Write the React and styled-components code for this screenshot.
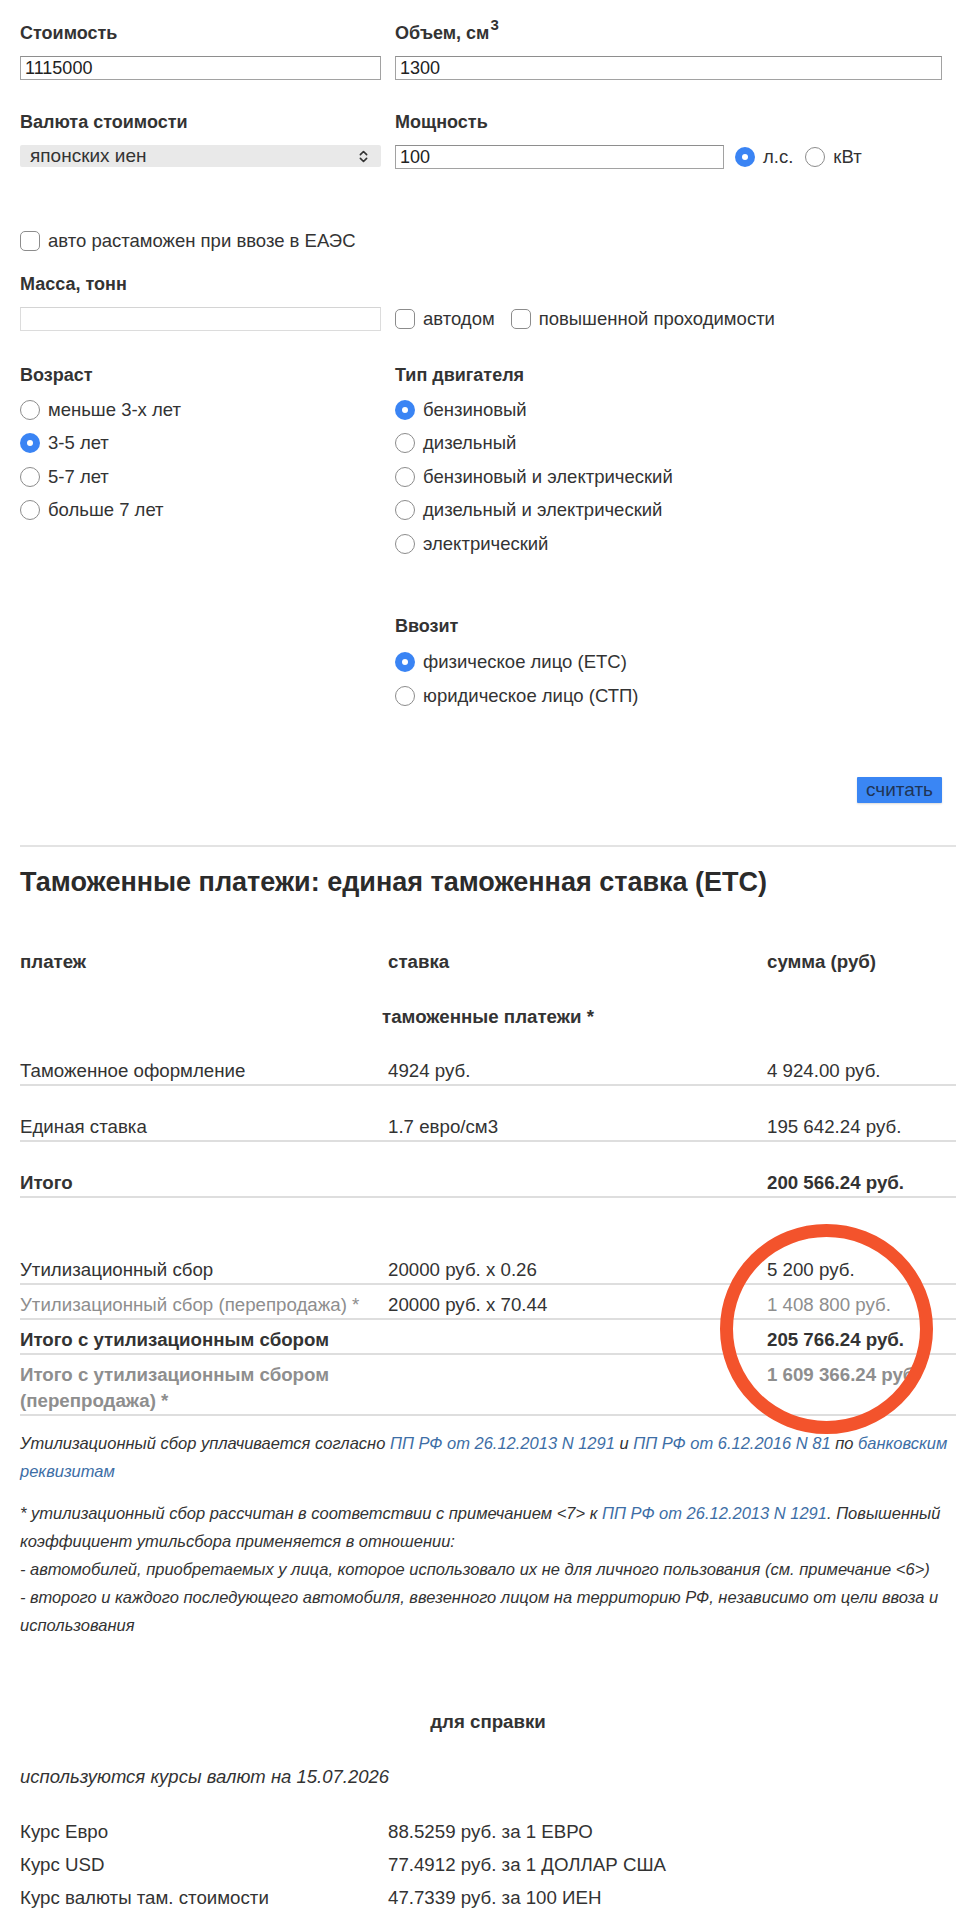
import React from 'react';
import styled, { createGlobalStyle, css } from 'styled-components';
import { ChevronsUpDown } from 'lucide-react';

const GlobalStyle = createGlobalStyle`
  html, body { margin: 0; padding: 0; background: #fff; }
  body {
    font-family: "Liberation Sans", Arial, Helvetica, sans-serif;
    color: #333;
    -webkit-font-smoothing: antialiased;
  }
  * { box-sizing: border-box; }
`;

const Page = styled.div`
  width: 960px;
  padding: 22px 4px 40px 20px;
`;

const FormRow = styled.div`
  display: grid;
  grid-template-columns: 375px 1fr;
  margin-top: ${(p) => p.$mt || 0}px;
`;

const Col = styled.div`
  padding-right: 14px;
  display: flex;
  flex-direction: column;
  justify-content: ${(p) => (p.$end ? 'flex-end' : 'flex-start')};
`;

const Label = styled.div`
  font-size: 18px;
  line-height: 22px;
  font-weight: bold;
  color: #333;
  margin-bottom: ${(p) => (p.$mb != null ? p.$mb : 12)}px;
  margin-top: ${(p) => p.$mt || 0}px;
  sup {
    font-size: 15px;
    line-height: 0;
    vertical-align: 9px;
    margin-left: 1px;
  }
`;

const TextInput = styled.input`
  display: block;
  width: ${(p) => (p.$w ? `${p.$w}px` : '100%')};
  height: 24px;
  margin: 0;
  padding: 0 4px;
  font-family: "Liberation Sans", Arial, sans-serif;
  font-size: 18px;
  color: #222;
  background: #fff;
  border: 1px solid ${(p) => (p.$light ? '#dcdcdc' : '#a2a2a2')};
  border-top-color: ${(p) => (p.$light ? '#d4d4d4' : '#8e8e8e')};
  outline: none;
`;

const SelectBox = styled.div`
  height: 22px;
  background: #e9e9e9;
  display: flex;
  align-items: center;
  justify-content: space-between;
  padding: 0 10px;
  font-size: 19px;
  color: #333;
  border-radius: 2px;
`;

const PowerRow = styled.div`
  display: flex;
  align-items: center;
`;

const Choice = styled.label`
  display: flex;
  align-items: center;
  gap: 8px;
  font-size: 18.5px;
  color: #333;
  height: ${(p) => (p.$h ? `${p.$h}px` : 'auto')};
  margin-left: ${(p) => p.$ml || 0}px;
  white-space: nowrap;
`;

const RadioDot = styled.span`
  flex: none;
  width: 20px;
  height: 20px;
  border-radius: 50%;
  position: relative;
  ${(p) =>
    p.$on
      ? css`
          background: #3a84f4;
          &::after {
            content: '';
            position: absolute;
            left: 7px;
            top: 7px;
            width: 6px;
            height: 6px;
            border-radius: 50%;
            background: #fff;
          }
        `
      : css`
          border: 1.5px solid #8c8c8c;
          background: #fff;
        `}
`;

const CheckBox = styled.span`
  flex: none;
  width: 20px;
  height: 20px;
  border: 1.5px solid #8c8c8c;
  border-radius: 5px;
  background: #fff;
`;

const CheckRow = styled.div`
  display: flex;
  align-items: center;
  height: 24px;
  gap: 16px;
`;

const OptionList = styled.div`
  display: flex;
  flex-direction: column;
`;

const ButtonRow = styled.div`
  display: flex;
  justify-content: flex-end;
  padding-right: 14px;
  margin-top: 64px;
`;

const CalcButton = styled.button`
  width: 85px;
  height: 26px;
  background: #3a86f4;
  color: #1f3556;
  border: none;
  border-radius: 1px;
  font-family: "Liberation Sans", Arial, sans-serif;
  font-size: 19px;
  line-height: 26px;
  padding: 0;
  box-shadow: 0 1px 2px rgba(0, 0, 0, 0.15);
`;

const Rule = styled.hr`
  margin: 42px 0 0;
  border: none;
  height: 2px;
  background: #e3e3e3;
`;

const Heading = styled.h2`
  margin: 20px 0 0;
  font-size: 27px;
  line-height: 30px;
  font-weight: bold;
  color: #2b2b2b;
`;

const TRow = styled.div`
  display: grid;
  grid-template-columns: 368px 379px 1fr;
  font-size: 18.7px;
  line-height: 26px;
  padding-top: ${(p) => p.$pt || 0}px;
  margin-top: ${(p) => p.$mt || 0}px;
  font-weight: ${(p) => (p.$bold ? 'bold' : 'normal')};
  color: ${(p) => (p.$muted ? '#8e8e8e' : '#333')};
  border-bottom: ${(p) => (p.$line ? '2px solid #dedede' : 'none')};
`;

const Cell = styled.div`
  color: ${(p) => (p.$dark ? '#333' : 'inherit')};
`;

const CenterRow = styled.div`
  text-align: center;
  font-size: 18.7px;
  line-height: 26px;
  font-weight: bold;
  color: #333;
  padding-top: ${(p) => p.$pt || 0}px;
  margin-top: ${(p) => p.$mt || 0}px;
`;

const RingBlock = styled.div`
  position: relative;
  margin-top: 52px;
`;

const Ring = styled.svg`
  position: absolute;
  left: 700px;
  top: -26px;
  width: 213px;
  height: 210px;
  pointer-events: none;
`;

const Note = styled.p`
  margin: ${(p) => p.$mt || 0}px 0 0;
  font-size: 16.5px;
  line-height: 28px;
  font-style: italic;
  color: #333;
`;

const Link = styled.a`
  color: #3d6ea6;
  text-decoration: none;
`;

const DateLine = styled.div`
  margin-top: 29px;
  font-size: 18.5px;
  line-height: 26px;
  font-style: italic;
  color: #333;
`;

const RatesTable = styled.div`
  margin-top: 22px;
`;

const RateRow = styled.div`
  display: grid;
  grid-template-columns: 368px 1fr;
  font-size: 18.7px;
  line-height: 26px;
  padding-top: 7px;
  color: #333;
`;

function Radio({ on, children, h, ml }) {
  return (
    <Choice $h={h} $ml={ml}>
      <RadioDot $on={on} />
      {children}
    </Choice>
  );
}

function Check({ children, h }) {
  return (
    <Choice $h={h}>
      <CheckBox />
      {children}
    </Choice>
  );
}

const ages = ['меньше 3-х лет', '3-5 лет', '5-7 лет', 'больше 7 лет'];
const engines = [
  'бензиновый',
  'дизельный',
  'бензиновый и электрический',
  'дизельный и электрический',
  'электрический',
];
const importers = ['физическое лицо (ЕТС)', 'юридическое лицо (СТП)'];

export default function App() {
  return (
    <>
      <GlobalStyle />
      <Page>
        <FormRow>
          <Col>
            <Label>Стоимость</Label>
            <TextInput defaultValue="1115000" />
          </Col>
          <Col>
            <Label>
              Объем, см<sup>3</sup>
            </Label>
            <TextInput defaultValue="1300" />
          </Col>
        </FormRow>

        <FormRow $mt={31}>
          <Col>
            <Label>Валюта стоимости</Label>
            <SelectBox>
              <span>японских иен</span>
              <ChevronsUpDown size={15} strokeWidth={2.6} color="#333" />
            </SelectBox>
          </Col>
          <Col>
            <Label>Мощность</Label>
            <PowerRow>
              <TextInput $w={329} defaultValue="100" />
              <Radio on ml={11}>л.с.</Radio>
              <Radio ml={12}>кВт</Radio>
            </PowerRow>
          </Col>
        </FormRow>

        <FormRow $mt={60}>
          <Col>
            <Check h={24}>авто растаможен при ввозе в ЕАЭС</Check>
          </Col>
        </FormRow>

        <FormRow $mt={20}>
          <Col>
            <Label>Масса, тонн</Label>
            <TextInput $light />
          </Col>
          <Col $end>
            <CheckRow>
              <Check>автодом</Check>
              <Check>повышенной проходимости</Check>
            </CheckRow>
          </Col>
        </FormRow>

        <FormRow $mt={33}>
          <Col>
            <Label $mb={7}>Возраст</Label>
            <OptionList>
              {ages.map((a, i) => (
                <Radio key={a} on={i === 1} h={33.5}>
                  {a}
                </Radio>
              ))}
            </OptionList>
          </Col>
          <Col>
            <Label $mb={7}>Тип двигателя</Label>
            <OptionList>
              {engines.map((e, i) => (
                <Radio key={e} on={i === 0} h={33.5}>
                  {e}
                </Radio>
              ))}
            </OptionList>
            <Label $mt={54.5} $mb={8.5}>
              Ввозит
            </Label>
            <OptionList>
              {importers.map((e, i) => (
                <Radio key={e} on={i === 0} h={33.5}>
                  {e}
                </Radio>
              ))}
            </OptionList>
          </Col>
        </FormRow>

        <ButtonRow>
          <CalcButton type="button">считать</CalcButton>
        </ButtonRow>

        <Rule />

        <Heading>Таможенные платежи: единая таможенная ставка (ЕТС)</Heading>

        <TRow $mt={52} $bold>
          <Cell>платеж</Cell>
          <Cell>ставка</Cell>
          <Cell>сумма (руб)</Cell>
        </TRow>
        <CenterRow $pt={29}>таможенные платежи *</CenterRow>

        <TRow $pt={28} $line>
          <Cell>Таможенное оформление</Cell>
          <Cell>4924 руб.</Cell>
          <Cell>4 924.00 руб.</Cell>
        </TRow>
        <TRow $pt={28} $line>
          <Cell>Единая ставка</Cell>
          <Cell>1.7 евро/см3</Cell>
          <Cell>195 642.24 руб.</Cell>
        </TRow>
        <TRow $pt={28} $line $bold>
          <Cell>Итого</Cell>
          <Cell />
          <Cell>200 566.24 руб.</Cell>
        </TRow>

        <RingBlock>
          <TRow $pt={7} $line>
            <Cell>Утилизационный сбор</Cell>
            <Cell>20000 руб. x 0.26</Cell>
            <Cell>5 200 руб.</Cell>
          </TRow>
          <TRow $pt={7} $line $muted>
            <Cell>Утилизационный сбор (перепродажа) *</Cell>
            <Cell $dark>20000 руб. x 70.44</Cell>
            <Cell>1 408 800 руб.</Cell>
          </TRow>
          <TRow $pt={7} $line $bold>
            <Cell>Итого с утилизационным сбором</Cell>
            <Cell />
            <Cell>205 766.24 руб.</Cell>
          </TRow>
          <TRow $pt={7} $line $bold $muted>
            <Cell>Итого с утилизационным сбором (перепродажа) *</Cell>
            <Cell />
            <Cell>1 609 366.24 руб.</Cell>
          </TRow>
          <Ring viewBox="0 0 213 210">
            <ellipse
              cx="106.5"
              cy="105"
              rx="100"
              ry="98.5"
              fill="none"
              stroke="#f3532c"
              strokeWidth="13"
            />
          </Ring>
        </RingBlock>

        <Note $mt={13}>
          Утилизационный сбор уплачивается согласно{' '}
          <Link href="#">ПП РФ от 26.12.2013 N 1291</Link> и{' '}
          <Link href="#">ПП РФ от 6.12.2016 N 81</Link> по{' '}
          <Link href="#">банковским реквизитам</Link>
        </Note>
        <Note $mt={14}>
          * утилизационный сбор рассчитан в соответствии с примечанием &lt;7&gt; к{' '}
          <Link href="#">ПП РФ от 26.12.2013 N 1291</Link>. Повышенный коэффициент
          утильсбора применяется в отношении:
          <br />- автомобилей, приобретаемых у лица, которое использовало их не для
          личного пользования (см. примечание &lt;6&gt;)
          <br />- второго и каждого последующего автомобиля, ввезенного лицом на
          территорию РФ, независимо от цели ввоза и использования
        </Note>

        <CenterRow $mt={70}>для справки</CenterRow>
        <DateLine>используются курсы валют на 15.07.2026</DateLine>
        <RatesTable>
          <RateRow>
            <div>Курс Евро</div>
            <div>88.5259 руб. за 1 ЕВРО</div>
          </RateRow>
          <RateRow>
            <div>Курс USD</div>
            <div>77.4912 руб. за 1 ДОЛЛАР США</div>
          </RateRow>
          <RateRow>
            <div>Курс валюты там. стоимости</div>
            <div>47.7339 руб. за 100 ИЕН</div>
          </RateRow>
        </RatesTable>
      </Page>
    </>
  );
}
